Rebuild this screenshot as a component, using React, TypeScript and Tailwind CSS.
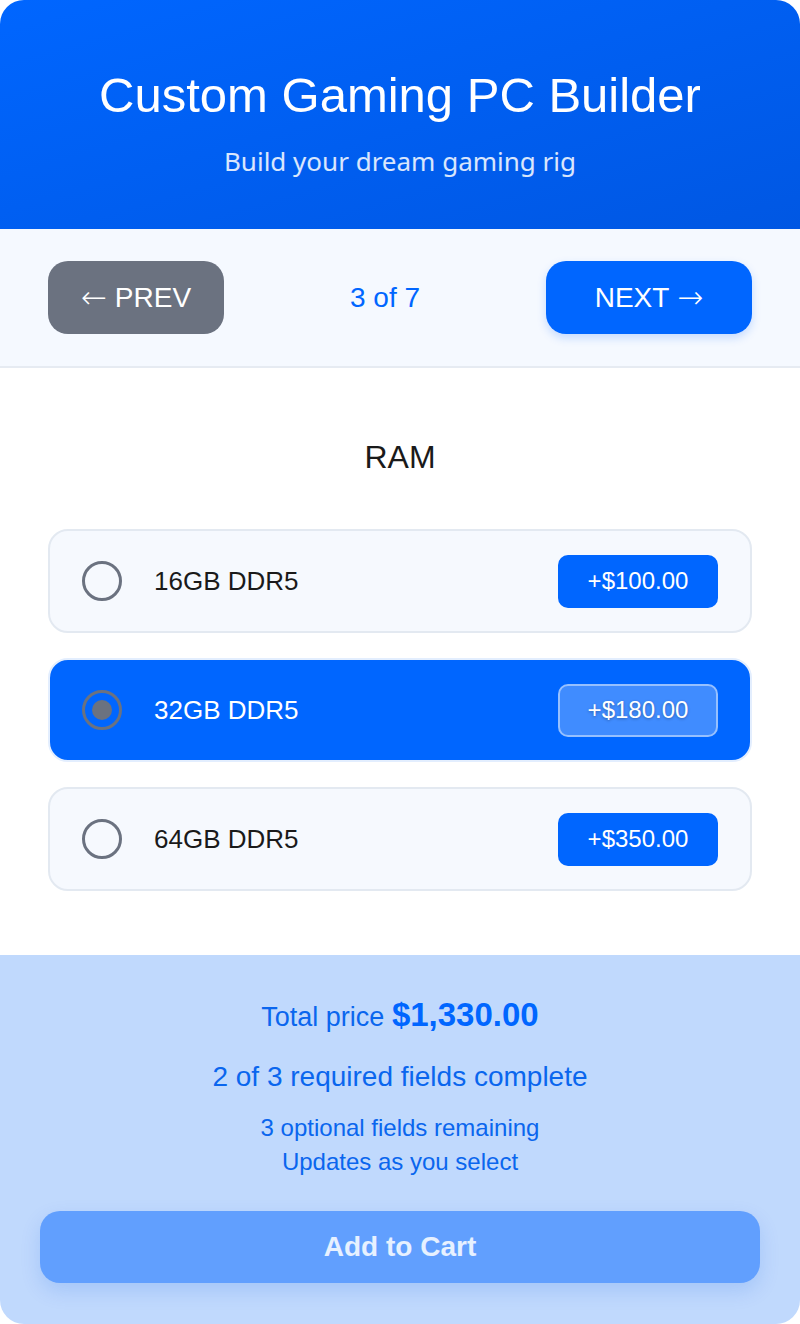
import React, { useState } from 'react';

interface Option {
  id: string;
  label: string;
  price: number;
}

const options: Option[] = [
  { id: '16', label: '16GB DDR5', price: 100 },
  { id: '32', label: '32GB DDR5', price: 180 },
  { id: '64', label: '64GB DDR5', price: 350 },
];

const fmt = (n: number) =>
  n.toLocaleString('en-US', { minimumFractionDigits: 2, maximumFractionDigits: 2 });

export default function App() {
  const [selected, setSelected] = useState('32');

  return (
    <div className="w-[800px] min-h-[1324px] bg-white font-['Liberation_Sans',Arial,sans-serif]">
      {/* header */}
      <div className="rounded-t-3xl bg-gradient-to-br from-[#0066ff] to-[#0057e3] pt-[66px] pb-[49px] text-center text-white">
        <h1 className="text-[49px] leading-[58px]">Custom Gaming PC Builder</h1>
        <p className="mt-[18px] text-[26px] leading-[38px] text-white/85 font-['Noto_Sans',sans-serif]">
          Build your dream gaming rig
        </p>
      </div>

      {/* step nav */}
      <div className="flex items-center justify-between border-b-2 border-[#e6ebf2] bg-[#f5f9ff] px-12 py-8">
        <button className="flex h-[73px] w-[176px] items-center justify-center gap-[8px] rounded-[20px] bg-[#6b7280] text-[28px] text-white">
          <span className="font-['DejaVu_Sans',sans-serif] text-[31px] font-extralight leading-none">←</span>
          <span>PREV</span>
        </button>
        <span className="text-[28px] text-[#0066ff]">3 of 7</span>
        <button className="flex h-[73px] w-[206px] items-center justify-center gap-[8px] rounded-[20px] bg-[#0066ff] text-[28px] text-white shadow-[0_4px_10px_rgba(0,102,255,0.2)]">
          <span>NEXT</span>
          <span className="font-['DejaVu_Sans',sans-serif] text-[31px] font-extralight leading-none">→</span>
        </button>
      </div>

      {/* options */}
      <div className="px-12 pt-[71px] pb-[64px]">
        <h2 className="text-center text-[32px] leading-[36px] text-[#1a1a1a]">RAM</h2>
        <div className="mt-[54px] flex flex-col gap-[25px]">
          {options.map((o) => {
            const on = o.id === selected;
            return (
              <button
                key={o.id}
                onClick={() => setSelected(o.id)}
                className={
                  on
                    ? 'flex h-[104px] items-center rounded-[20px] border-2 border-[#e3eefe] bg-[#0066ff] px-8 text-left'
                    : 'flex h-[104px] items-center rounded-[20px] border-2 border-[#e3e9f1] bg-[#f6f9fe] px-8 text-left'
                }
              >
                <span className="flex h-10 w-10 shrink-0 items-center justify-center rounded-full border-[3px] border-[#6b7280]">
                  {on && <span className="h-[20px] w-[20px] rounded-full bg-[#6b7280]" />}
                </span>
                <span className={on ? 'ml-8 flex-1 text-[26px] text-white' : 'ml-8 flex-1 text-[26px] text-[#1a1a1a]'}>
                  {o.label}
                </span>
                <span
                  className={
                    on
                      ? 'flex h-[53px] w-[160px] items-center justify-center rounded-[10px] border-2 border-white/45 bg-white/25 text-[24px] text-white [text-shadow:0_1px_3px_rgba(0,0,0,0.3)]'
                      : 'flex h-[53px] w-[160px] items-center justify-center rounded-[10px] bg-[#0066ff] text-[24px] text-white'
                  }
                >
                  +${fmt(o.price)}
                </span>
              </button>
            );
          })}
        </div>
      </div>

      {/* summary */}
      <div className="rounded-b-3xl bg-[#c0d9fd] px-10 pt-[40px] pb-[41px] text-center">
        <p className="text-[27px] leading-[40px] text-[#0a66ee]">
          Total price <span className="text-[33px] font-bold text-[#0066ff]">$1,330.00</span>
        </p>
        <p className="mt-[20px] text-[28px] leading-[40px] text-[#0a66ee]">2 of 3 required fields complete</p>
        <p className="mt-[14px] text-[24px] leading-[34px] text-[#0a66ee]">3 optional fields remaining</p>
        <p className="text-[24px] leading-[34px] text-[#0a66ee]">Updates as you select</p>
        <button className="mt-[32px] h-[72px] w-full rounded-[20px] bg-[#619ffe] text-[28px] font-bold text-white/85 shadow-[0_8px_20px_rgba(0,90,220,0.15)]">
          Add to Cart
        </button>
      </div>
    </div>
  );
}
